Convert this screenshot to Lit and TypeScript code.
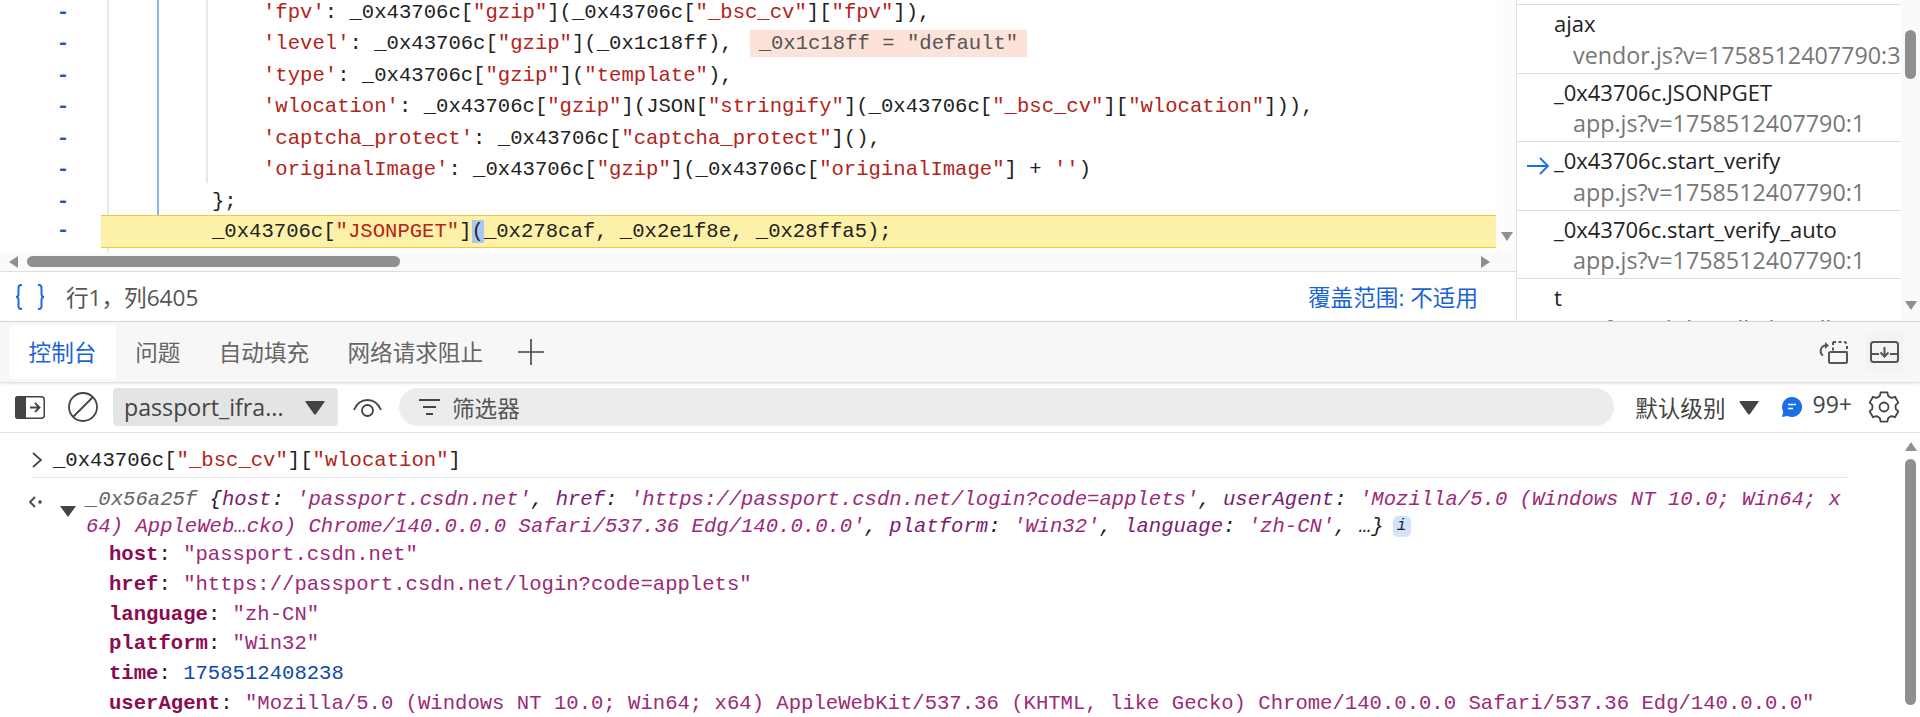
import { LitElement, html, css, svg } from 'lit';
import { customElement } from 'lit/decorators.js';

const CODE = [
  { indent: 'deep', text: `'fpv': _0x43706c["gzip"](_0x43706c["_bsc_cv"]["fpv"]),` },
  { indent: 'deep', text: `'level': _0x43706c["gzip"](_0x1c18ff),`, inline: `_0x1c18ff = "default"` },
  { indent: 'deep', text: `'type': _0x43706c["gzip"]("template"),` },
  { indent: 'deep', text: `'wlocation': _0x43706c["gzip"](JSON["stringify"](_0x43706c["_bsc_cv"]["wlocation"])),` },
  { indent: 'deep', text: `'captcha_protect': _0x43706c["captcha_protect"](),` },
  { indent: 'deep', text: `'originalImage': _0x43706c["gzip"](_0x43706c["originalImage"] + '')` },
  { indent: 'flat', text: `};` },
];

const FRAMES = [
  { name: 'ajax', file: 'vendor.js?v=1758512407790:33' },
  { name: '_0x43706c.JSONPGET', file: 'app.js?v=1758512407790:1' },
  { name: '_0x43706c.start_verify', file: 'app.js?v=1758512407790:1', current: true },
  { name: '_0x43706c.start_verify_auto', file: 'app.js?v=1758512407790:1' },
  { name: 't', file: 'wafmatch.bundle.bundle.js:1' },
];

const PROPS = [
  { key: 'host', value: '"passport.csdn.net"' },
  { key: 'href', value: '"https://passport.csdn.net/login?code=applets"' },
  { key: 'language', value: '"zh-CN"' },
  { key: 'platform', value: '"Win32"' },
  { key: 'time', value: '1758512408238', num: true },
  { key: 'userAgent', value: '"Mozilla/5.0 (Windows NT 10.0; Win64; x64) AppleWebKit/537.36 (KHTML, like Gecko) Chrome/140.0.0.0 Safari/537.36 Edg/140.0.0.0"' },
];

// strings get the red token colour, everything else stays default
function tokens(src: string) {
  return src.split(/("[^"]*"|'[^']*')/).map((part, i) =>
    i % 2 ? html`<span class="str">${part}</span>` : part
  );
}

// six lobed settings gear, centred on 16,16
function gearPath() {
  const pt = (deg: number, r: number) => {
    const a = (deg * Math.PI) / 180;
    return `${(16 + r * Math.cos(a)).toFixed(2)} ${(16 + r * Math.sin(a)).toFixed(2)}`;
  };
  let d = '';
  for (let i = 0; i < 6; i++) {
    const c = -90 + i * 60;
    d += `${i ? 'L' : 'M'}${pt(c - 13, 15)}L${pt(c + 13, 15)}L${pt(c + 20, 12)}L${pt(c + 30, 11.5)}L${pt(c + 40, 12)}`;
  }
  return d + 'Z';
}

const triangle = svg`<path d="M1 1h18q1 0 .5 1L11 14q-1 1-2 0L.5 2Q0 1 1 1z" fill="#444"/>`;

@customElement('app-root')
export class AppRoot extends LitElement {
  static styles = css`
    :host {
      display: block;
      width: 1920px;
      height: 717px;
      overflow: hidden;
      background: #fff;
      color: #222;
      font-family: "Open Sans", "Noto Sans CJK SC", sans-serif;
      font-size: 22.6px;
    }
    svg { display: block; flex: none; }
    .mono { font-family: "Liberation Mono", monospace; font-size: 20.6px; white-space: pre; }
    .str { color: #b3241a; }

    .top { display: flex; height: 322px; border-bottom: 1px solid #d9d9d9; box-sizing: border-box; }
    .editor { width: 1516px; display: flex; flex-direction: column; flex: none; }
    .pane { height: 252px; display: flex; overflow: hidden; }
    .code { width: 1497px; position: relative; margin-top: -4px; }
    .guide { position: absolute; top: 0; width: 2px; background: #e8e8e8; }
    .g1 { left: 107px; height: 256px; }
    .g2 { left: 157px; width: 2px; height: 219px; background: #8ab4f0; }
    .g3 { left: 206px; height: 187px; }
    .line { display: flex; height: 31.43px; line-height: 33px; position: relative; }
    .dash { width: 101px; flex: none; text-align: center; padding-left: 25px; box-sizing: border-box; color: #1a56c4; font-weight: 700; }
    .deep { padding-left: 162px; }
    .flat { padding-left: 111px; }
    .inline { background: #fde2d9; color: #555; margin-left: 17px; padding: 0 9px; height: 27px; line-height: 28px; align-self: center; }
    .paused { height: 33px; line-height: 32px; margin-top: -1px; }
    .paused .body { flex: 1; background: #fdf1a9; border-top: 1px solid #f4c83c; border-bottom: 1px solid #f4c83c; padding-left: 111px; margin-right: 1px; height: 31px; }
    .paused em { font-style: normal; background: #a9c7f5; }

    .vtrack { width: 19px; flex: none; background: #fcfcfc; display: flex; flex-direction: column; align-items: center; padding-top: 232px; box-sizing: border-box; }
    .hbar { height: 19px; background: #fafafa; display: flex; align-items: center; padding: 0 26px 0 9px; box-sizing: border-box; }
    .hthumb { margin-left: 8px; width: 373px; height: 11px; border-radius: 6px; background: #8f8f8f; }
    .hbar .end { margin-left: auto; }
    .status { flex: 1; border-top: 1px solid #dfdfdf; display: flex; align-items: center; padding: 0 38px 0 15px; color: #555; }
    .status span { margin-left: 21px; }
    .status a { margin-left: auto; color: #1a63d6; }

    .stack { flex: 1; display: flex; border-left: 1px solid #e2e2e2; overflow: hidden; }
    .frames { flex: 1; min-width: 0; padding-top: 4px; }
    .frame { display: grid; grid-template-columns: 37px 1fr; height: 68.5px; box-sizing: border-box; border-top: 1px solid #dedede; padding-top: 5px; line-height: 27px; white-space: nowrap; overflow: hidden; font-size: 22px; }
    .frame svg { margin: 10px 0 0 10px; }
    .frame .name { grid-column: 2; color: #222; }
    .frame .file { grid-column: 2; color: #777; padding-left: 19px; font-size: 23.3px; line-height: 24px; }
    .strack { width: 19px; flex: none; background: #fafafa; display: flex; flex-direction: column; align-items: center; padding-top: 30px; box-sizing: border-box; }
    .sthumb { width: 11px; height: 49px; border-radius: 6px; background: #8f8f8f; }
    .strack svg { margin-top: 222px; }

    .tabs { height: 60px; background: #f7f7f7; display: flex; align-items: center; padding: 0 17px 0 9px; box-shadow: 0 1px 3px rgba(0,0,0,.18); position: relative; box-sizing: border-box; }
    .tab { padding: 0 19.2px; height: 53px; line-height: 53px; color: #666; border-radius: 4px; }
    .tab.on { background: #fff; color: #1a63d6; padding: 0 19.6px; }
    .tabs .plus { margin-left: 16px; }
    .tabs .undock { margin-left: auto; }
    .tabs .dockbox { margin-left: 18px; background: #f3f3f3; padding: 8px 4px; border-radius: 4px; }

    .bar { height: 51px; display: flex; align-items: center; padding: 0 20px 0 15px; border-bottom: 1px solid #e2e2e2; box-sizing: border-box; color: #444; }
    .block { margin-left: 23px; }
    .ctx { margin-left: 15px; width: 225px; height: 38px; border-radius: 4px; background: #e4e4e4; display: flex; align-items: center; padding: 0 13px 0 11px; box-sizing: border-box; justify-content: space-between; font-size: 23.2px; }
    .eye { margin-left: 15px; }
    .filter { margin-left: 17px; flex: 1; height: 38px; border-radius: 19px; background: #ececec; display: flex; align-items: center; gap: 12px; padding-left: 20px; color: #555; }
    .level { margin-left: 21px; display: flex; align-items: center; gap: 13px; }
    .msg { margin-left: 23px; display: flex; align-items: center; gap: 11px; }
    .msg span { margin-top: -7px; font-size: 23px; }
    .set { margin-left: 16px; }

    .console { display: flex; height: 285px; }
    .log { flex: 1; min-width: 0; overflow: hidden; }
    .input { margin-left: 32px; height: 45px; display: flex; align-items: center; gap: 11px; width: 1815px; padding-top: 10px; border-bottom: 1px solid #e6e6e6; box-sizing: border-box; }
    .input .mono { color: #222; }
    .result { padding: 8px 0 0 86px; position: relative; }
    .prev { height: 26.5px; line-height: 27.5px; font-style: italic; color: #222; }
    .prev .cls { color: #666; }
    .prev b { font-weight: 400; color: #7a1c70; }
    .prev i { color: #9c2a78; }
    .back { position: absolute; left: 29px; top: 18px; }
    .tri { position: absolute; left: 60px; top: 28px; }
    .badge { display: inline-block; font-style: italic; font-size: 16px; width: 18px; height: 21px; line-height: 21px; text-align: center; border-radius: 5px; background: #d3e3fa; color: #223; margin-left: 9px; vertical-align: 2px; }
    .prop { margin-left: 23px; height: 29.8px; line-height: 29.8px; color: #222; }
    .prev + .prop { margin-top: 1px; }
    .prop b { color: #8b0a50; }
    .prop i { font-style: normal; color: #9c2a78; }
    .prop i.n { color: #0b4aa8; }
    .ctrack { width: 19px; flex: none; display: flex; flex-direction: column; align-items: center; padding-top: 9px; box-sizing: border-box; }
    .cthumb { margin-top: 8px; width: 11px; height: 246px; border-radius: 6px; background: #8f8f8f; }
  `;

  render() {
    return html`
      <div class="top">
        <div class="editor">
          <div class="pane">
            <div class="code">
              <div class="guide g1"></div>
              <div class="guide g2"></div>
              <div class="guide g3"></div>
              ${CODE.map((l) => html`
                <div class="line mono">
                  <span class="dash">-</span>
                  <span class=${l.indent}>${tokens(l.text)}</span>
                  ${l.inline ? html`<span class="inline">${l.inline}</span>` : ''}
                </div>`)}
              <div class="line mono paused">
                <span class="dash">-</span>
                <span class="body">_0x43706c[<span class="str">"JSONPGET"</span>]<em>(</em>_0x278caf, _0x2e1f8e, _0x28ffa5);</span>
              </div>
            </div>
            <div class="vtrack">
              <svg width="12" height="10" viewBox="0 0 12 10"><path d="M0 0h12L6 9z" fill="#8f8f8f"/></svg>
            </div>
          </div>
          <div class="hbar">
            <svg width="10" height="12" viewBox="0 0 10 12"><path d="M9 0v12L0 6z" fill="#8f8f8f"/></svg>
            <div class="hthumb"></div>
            <svg class="end" width="10" height="12" viewBox="0 0 10 12"><path d="M1 0v12l9-6z" fill="#8f8f8f"/></svg>
          </div>
          <div class="status">
            <svg width="30" height="26" viewBox="0 0 30 26" fill="none" stroke="#1a6fe0" stroke-width="2"><path d="M7 1H6C4 1 3.500 2 3.500 4v6c0 2-1 3-2.500 3 1.500 0 2.500 1 2.500 3v6c0 2 .5 3 2.500 3h1M23 1h1c2 0 2.500 1 2.500 3v6c0 2 1 3 2.500 3-1.500 0-2.500 1-2.500 3v6c0 2-.5 3-2.500 3h-1"/></svg>
            <span>行1，列6405</span>
            <a>覆盖范围: 不适用</a>
          </div>
        </div>
        <div class="stack">
          <div class="frames">
            ${FRAMES.map((f) => html`
              <div class="frame">
                ${f.current
                  ? html`<svg width="22" height="18" viewBox="0 0 22 18" fill="none" stroke="#1a6fe8" stroke-width="1.800"><path d="M0 9h21M13 1l8 8-8 8"/></svg>`
                  : html`<span></span>`}
                <div class="name">${f.name}</div>
                <div class="file">${f.file}</div>
              </div>`)}
          </div>
          <div class="strack">
            <div class="sthumb"></div>
            <svg width="12" height="10" viewBox="0 0 12 10"><path d="M0 0h12L6 9z" fill="#8f8f8f"/></svg>
          </div>
        </div>
      </div>

      <div class="tabs">
        <div class="tab on">控制台</div>
        <div class="tab">问题</div>
        <div class="tab">自动填充</div>
        <div class="tab">网络请求阻止</div>
        <svg class="plus" width="26" height="26" viewBox="0 0 26 26" stroke="#444" stroke-width="1.600"><path d="M0 13h26M13 0v26"/></svg>
        <svg class="undock" width="30" height="24" viewBox="0 0 30 24" fill="none" stroke="#555" stroke-width="2">
          <path d="M8 5.500a5.500 5.500 0 0 0-3 10"/>
          <path d="M7 2l4 3.500L7 9z" fill="#555" stroke="none"/>
          <rect x="11" y="12" width="18" height="11" rx="1.500"/>
          <path d="M15 2h11a3 3 0 0 1 3 3v7M15 2v9" stroke-dasharray="3 2.500"/>
        </svg>
        <div class="dockbox">
          <svg width="29" height="22" viewBox="0 0 29 22" fill="none" stroke="#555" stroke-width="2"><rect x="1" y="1" width="27" height="20" rx="2.500"/><path d="M1 13h8M20 13h8M14.500 6v9M10.500 11.500l4 4 4-4"/></svg>
        </div>
      </div>

      <div class="bar">
        <svg width="30" height="23" viewBox="0 0 30 23"><rect x=".75" y=".75" width="28.500" height="21.500" rx="3" fill="none" stroke="#444" stroke-width="1.500"/><path d="M3 0h8v23H3a3 3 0 0 1-3-3V3a3 3 0 0 1 3-3z" fill="#444"/><path d="M15 11.500h9M20 7l4.500 4.500L20 16" fill="none" stroke="#444" stroke-width="1.800"/></svg>
        <svg class="block" width="30" height="30" viewBox="0 0 30 30" fill="none" stroke="#444" stroke-width="1.800"><circle cx="15" cy="15" r="14"/><path d="M5 25L25 5"/></svg>
        <div class="ctx">
          <span>passport_ifra...</span>
          <svg width="20" height="15" viewBox="0 0 20 15">${triangle}</svg>
        </div>
        <svg class="eye" width="29" height="19" viewBox="0 0 29 19" fill="none" stroke="#444" stroke-width="1.800"><path d="M1 12C4 5 9 2 14.500 2S25 5 28 12"/><circle cx="14.500" cy="12.500" r="5.500"/></svg>
        <div class="filter">
          <svg width="21" height="16" viewBox="0 0 21 16" stroke="#444" stroke-width="2"><path d="M0 1h21M4 8h13M7 15h7"/></svg>
          <span>筛选器</span>
        </div>
        <div class="level">
          <span>默认级别</span>
          <svg width="20" height="15" viewBox="0 0 20 15">${triangle}</svg>
        </div>
        <div class="msg">
          <svg width="20" height="20" viewBox="0 0 20 20"><path d="M10 0a10 10 0 1 1-4.500 18.900L0 20l1.200-5.300A10 10 0 0 1 10 0z" fill="#1a6fe8"/><path d="M6 7.500h8M6 11.500h5" stroke="#fff" stroke-width="1.600"/></svg>
          <span>99+</span>
        </div>
        <svg class="set" width="32" height="32" viewBox="0 0 32 32" fill="none" stroke="#444" stroke-width="1.800" stroke-linejoin="round"><path d=${gearPath()}/><circle cx="16" cy="16" r="4.500"/></svg>
      </div>

      <div class="console">
        <div class="log">
          <div class="input">
            <svg width="10" height="16" viewBox="0 0 10 16" fill="none" stroke="#444" stroke-width="1.800"><path d="M1 1l8 7-8 7"/></svg>
            <span class="mono">${tokens('_0x43706c["_bsc_cv"]["wlocation"]')}</span>
          </div>
          <div class="result">
            <svg class="back" width="13" height="12" viewBox="0 0 13 12" fill="none" stroke="#444" stroke-width="1.800"><path d="M6 1L1 6l5 5"/><circle cx="11" cy="6" r=".9" fill="#444"/></svg>
            <svg class="tri" width="16" height="11" viewBox="0 0 16 11"><path d="M0 0h16L8 11z" fill="#444"/></svg>
            <div class="prev mono"><span class="cls">_0x56a25f </span>{<b>host</b>: <i>'passport.csdn.net'</i>, <b>href</b>: <i>'https://passport.csdn.net/login?code=applets'</i>, <b>userAgent</b>: <i>'Mozilla/5.0 (Windows NT 10.0; Win64; x</i></div>
            <div class="prev mono"><i>64) AppleWeb…cko) Chrome/140.0.0.0 Safari/537.36 Edg/140.0.0.0'</i>, <b>platform</b>: <i>'Win32'</i>, <b>language</b>: <i>'zh-CN'</i>, …}<span class="badge">i</span></div>
            ${PROPS.map((p) => html`<div class="prop mono"><b>${p.key}</b>: <i class=${p.num ? 'n' : ''}>${p.value}</i></div>`)}
          </div>
        </div>
        <div class="ctrack">
          <svg width="12" height="9" viewBox="0 0 12 9"><path d="M6 0l6 9H0z" fill="#8f8f8f"/></svg>
          <div class="cthumb"></div>
        </div>
      </div>
    `;
  }
}
